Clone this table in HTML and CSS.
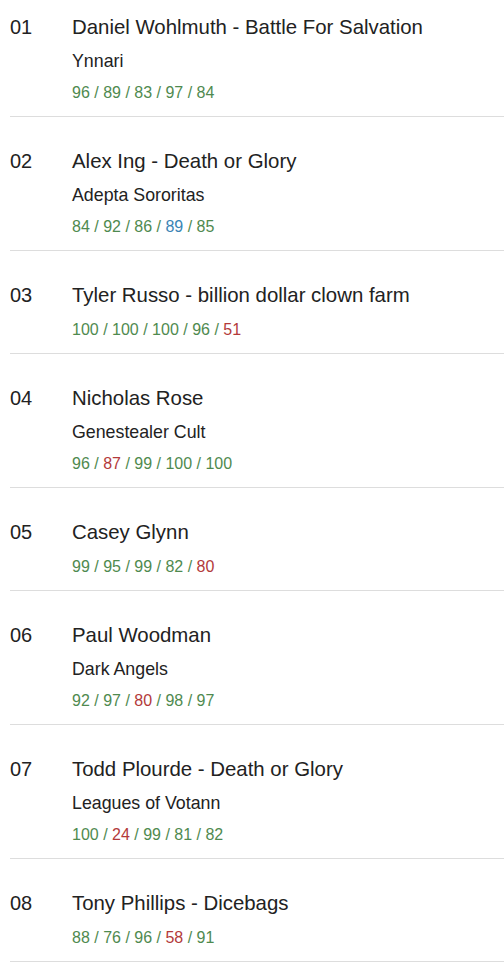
FILE: index.html
```html
<!DOCTYPE html>
<html>
<head>
<meta charset="utf-8">
<link rel="stylesheet" href="styles.css">
</head>
<body>
<ol class="list">
  <li class="row">
    <span class="rank">01</span>
    <div class="info">
      <div class="name">Daniel Wohlmuth - Battle For Salvation</div>
      <div class="faction">Ynnari</div>
      <div class="scores"><span class="g">96</span> / <span class="g">89</span> / <span class="g">83</span> / <span class="g">97</span> / <span class="g">84</span></div>
    </div>
  </li>
  <li class="row">
    <span class="rank">02</span>
    <div class="info">
      <div class="name">Alex Ing - Death or Glory</div>
      <div class="faction">Adepta Sororitas</div>
      <div class="scores"><span class="g">84</span> / <span class="g">92</span> / <span class="g">86</span> / <span class="b">89</span> / <span class="g">85</span></div>
    </div>
  </li>
  <li class="row">
    <span class="rank">03</span>
    <div class="info">
      <div class="name">Tyler Russo - billion dollar clown farm</div>
      <div class="scores"><span class="g">100</span> / <span class="g">100</span> / <span class="g">100</span> / <span class="g">96</span> / <span class="r">51</span></div>
    </div>
  </li>
  <li class="row">
    <span class="rank">04</span>
    <div class="info">
      <div class="name">Nicholas Rose</div>
      <div class="faction">Genestealer Cult</div>
      <div class="scores"><span class="g">96</span> / <span class="r">87</span> / <span class="g">99</span> / <span class="g">100</span> / <span class="g">100</span></div>
    </div>
  </li>
  <li class="row">
    <span class="rank">05</span>
    <div class="info">
      <div class="name">Casey Glynn</div>
      <div class="scores"><span class="g">99</span> / <span class="g">95</span> / <span class="g">99</span> / <span class="g">82</span> / <span class="r">80</span></div>
    </div>
  </li>
  <li class="row">
    <span class="rank">06</span>
    <div class="info">
      <div class="name">Paul Woodman</div>
      <div class="faction">Dark Angels</div>
      <div class="scores"><span class="g">92</span> / <span class="g">97</span> / <span class="r">80</span> / <span class="g">98</span> / <span class="g">97</span></div>
    </div>
  </li>
  <li class="row">
    <span class="rank">07</span>
    <div class="info">
      <div class="name">Todd Plourde - Death or Glory</div>
      <div class="faction">Leagues of Votann</div>
      <div class="scores"><span class="g">100</span> / <span class="r">24</span> / <span class="g">99</span> / <span class="g">81</span> / <span class="g">82</span></div>
    </div>
  </li>
  <li class="row">
    <span class="rank">08</span>
    <div class="info">
      <div class="name">Tony Phillips - Dicebags</div>
      <div class="scores"><span class="g">88</span> / <span class="g">76</span> / <span class="g">96</span> / <span class="r">58</span> / <span class="g">91</span></div>
    </div>
  </li>
</ol>
</body>
</html>
```
FILE: styles.css
```css
html, body {
  margin: 0;
  padding: 0;
  background: #fff;
}
body {
  font-family: "Liberation Sans", Arial, sans-serif;
  color: #222;
}
.list {
  list-style: none;
  margin: -17px 0 0 10px;
  padding: 0;
}
.row {
  display: flex;
  padding: 32px 0 13px 0;
  border-bottom: 1px solid #ddd;
}
.rank {
  width: 62px;
  font-size: 20px;
  line-height: 24px;
}
.info {
  display: flex;
  flex-direction: column;
}
.name {
  font-size: 20.4px;
  line-height: 24px;
}
.faction {
  font-size: 17.8px;
  line-height: 21px;
  margin-top: 12px;
}
.scores {
  font-size: 16px;
  line-height: 20px;
  margin-top: 11px;
  color: #4f8a4f;
}
.name + .scores {
  margin-top: 13px;
}
.g { color: #4f8a4f; }
.r { color: #b33a3a; }
.b { color: #3a85b5; }
```
